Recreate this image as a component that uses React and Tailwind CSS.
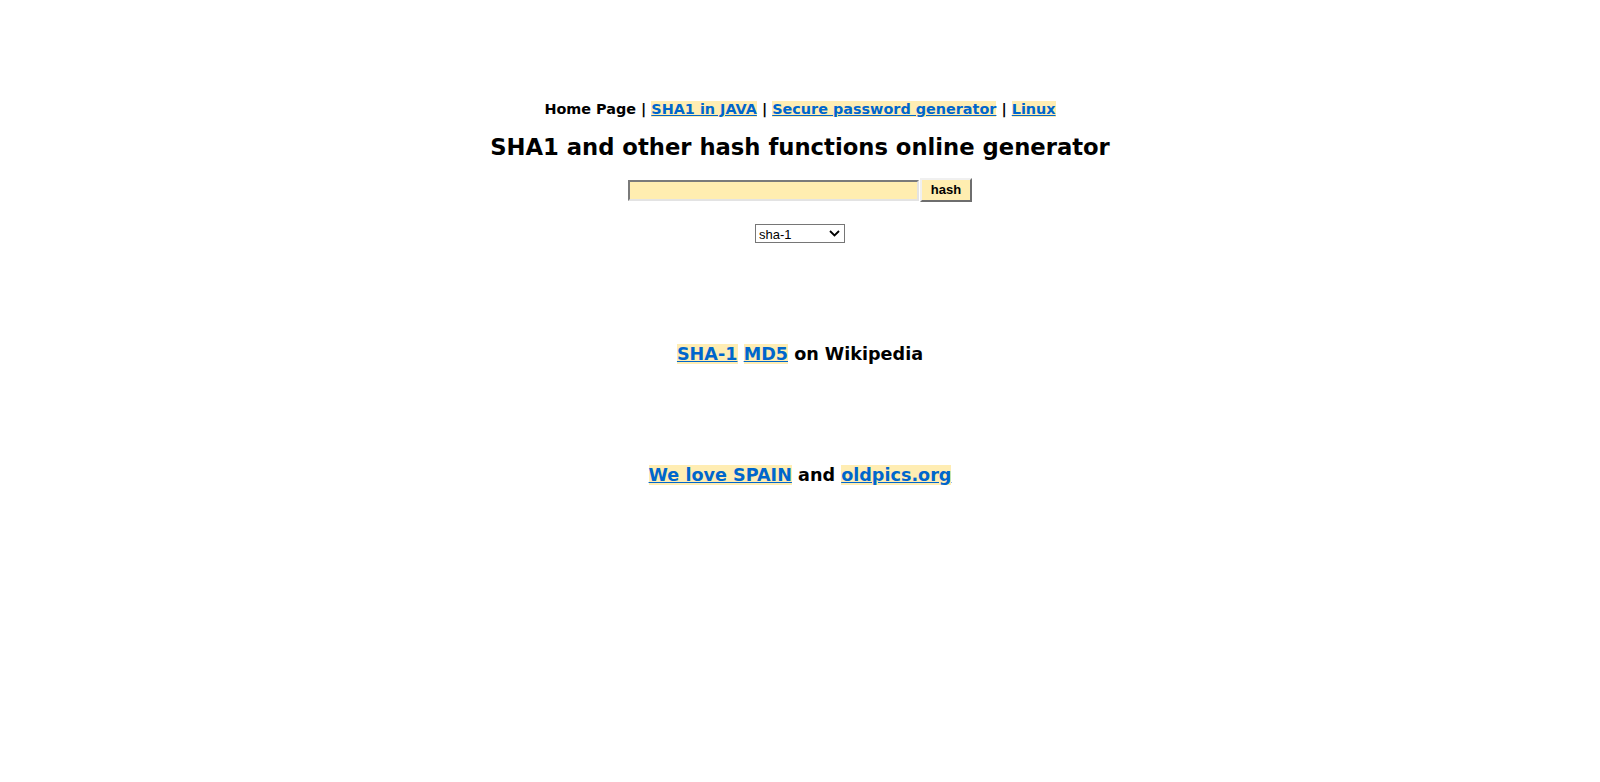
import React from "react";

const linkCls = "text-[#0066cc] underline bg-[#ffedb3]";

export default function App() {
  return (
    <div className="min-h-screen bg-white text-black font-['DejaVu_Sans',Verdana,sans-serif] font-bold">
      <div className="flex flex-col items-center pt-[100px]">
        {/* nav */}
        <p className="text-[14.4px] leading-[18px]">
          Home Page |{" "}
          <a href="#" className={linkCls}>SHA1 in JAVA</a> |{" "}
          <a href="#" className={linkCls}>Secure password generator</a> |{" "}
          <a href="#" className={linkCls}>Linux</a>
        </p>

        <h1 className="text-[22.7px] leading-[30px] mt-[14px]">
          SHA1 and other hash functions online generator
        </h1>

        <form className="flex items-center mt-[16px]" onSubmit={(e) => e.preventDefault()}>
          <input
            type="text"
            className="w-[291px] h-[21px] bg-[#ffedb0] border-2 border-t-[#7a7a7a] border-l-[#7a7a7a] border-b-[#e3e3e3] border-r-[#e3e3e3] outline-none"
          />
          <button
            type="submit"
            className="ml-[1px] w-[52px] h-[24px] bg-[#ffedb0] text-[13px] font-['Liberation_Sans',Arial,sans-serif] font-bold border-2 border-t-[#f0f0f0] border-l-[#f0f0f0] border-b-[#6e6e6e] border-r-[#6e6e6e]"
          >
            hash
          </button>
        </form>

        <div className="mt-[22px] relative w-[90px] h-[19px] border border-[#767676] bg-white flex items-center font-['Liberation_Sans',Arial,sans-serif] font-normal text-[13px]">
          <select className="appearance-none w-full h-full pl-[3px] bg-transparent outline-none">
            <option>sha-1</option>
            <option>md5</option>
            <option>sha-256</option>
          </select>
          <svg className="absolute right-[4px] top-[5px] pointer-events-none" width="11" height="7" viewBox="0 0 11 7">
            <path d="M1 1 L5.5 5.5 L10 1" fill="none" stroke="#000" strokeWidth="1.8" />
          </svg>
        </div>

        <p className="text-[17.6px] leading-[22px] mt-[100px]">
          <a href="#" className={linkCls}>SHA-1</a>{" "}
          <a href="#" className={linkCls}>MD5</a> on Wikipedia
        </p>

        <p className="text-[17.6px] leading-[22px] mt-[99px]">
          <a href="#" className={linkCls}>We love SPAIN</a> and{" "}
          <a href="#" className={linkCls}>oldpics.org</a>
        </p>
      </div>
    </div>
  );
}
